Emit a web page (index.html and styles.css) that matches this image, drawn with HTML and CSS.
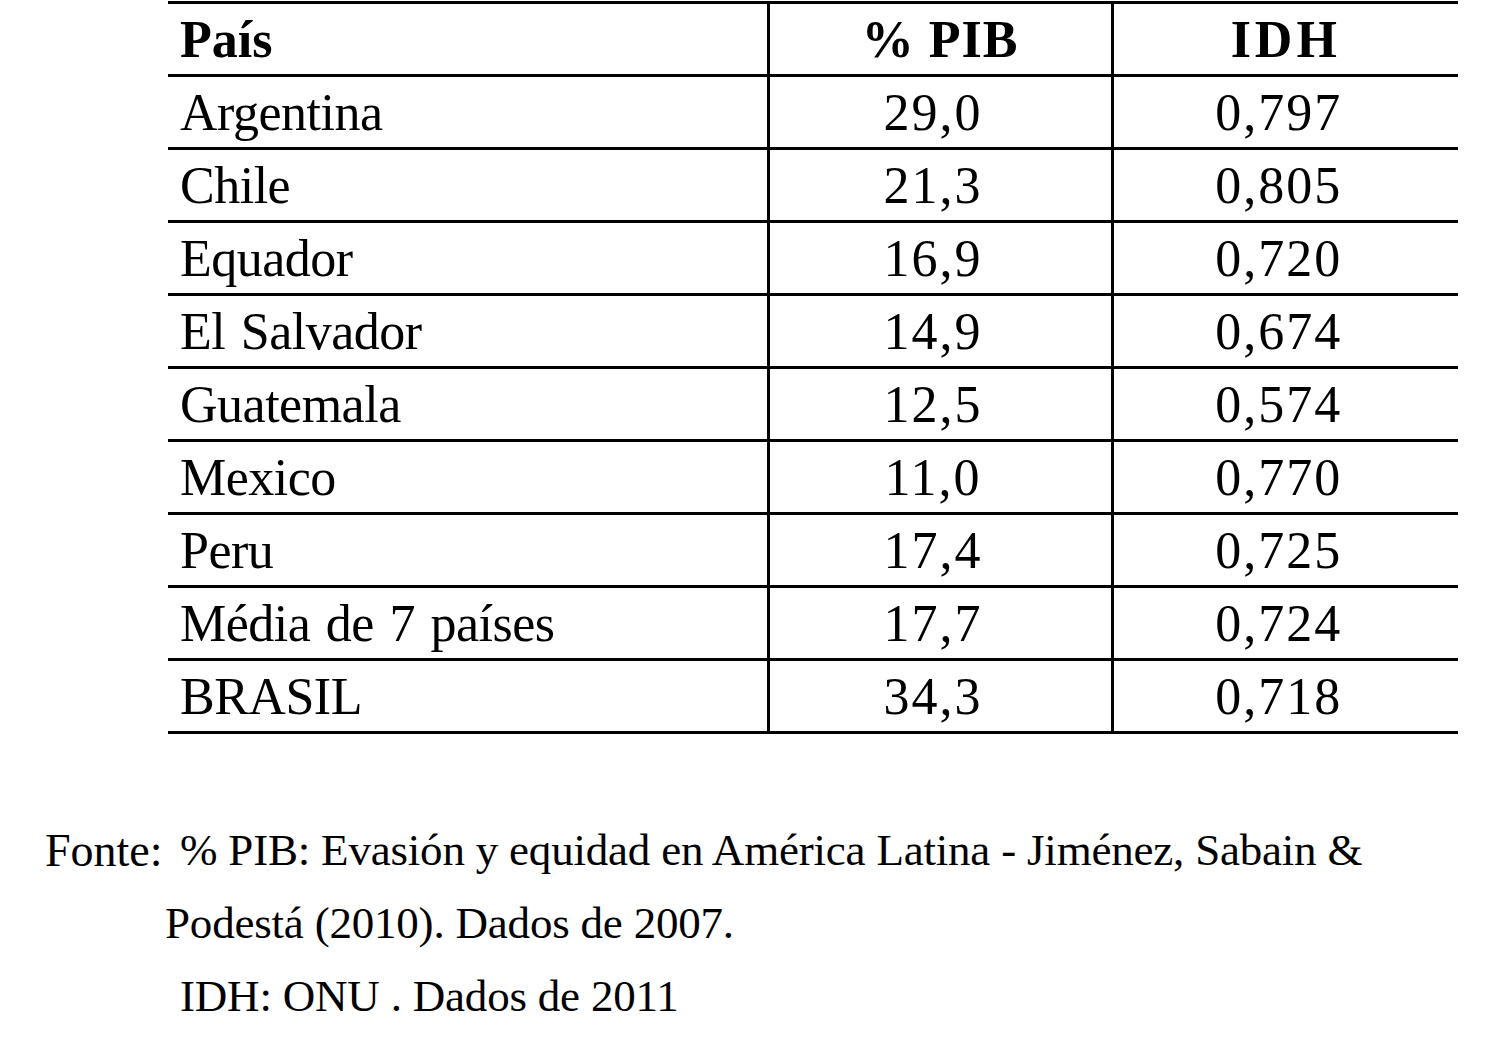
FILE: index.html
```html
<!DOCTYPE html>
<html lang="pt">
<head>
  <meta charset="UTF-8" />
  <meta name="viewport" content="width=device-width, initial-scale=1" />
  <title>% PIB e IDH</title>
  <link rel="stylesheet" href="styles.css">
</head>
<body>

  <table class="data-table">
    <colgroup>
      <col class="col-country">
      <col class="col-pib">
      <col class="col-idh">
    </colgroup>
    <thead>
      <tr>
        <th class="country">País</th>
        <th>% PIB</th>
        <th>IDH</th>
      </tr>
    </thead>
    <tbody>
      <tr><td class="country">Argentina</td><td>29,0</td><td>0,797</td></tr>
      <tr><td class="country">Chile</td><td>21,3</td><td>0,805</td></tr>
      <tr><td class="country">Equador</td><td>16,9</td><td>0,720</td></tr>
      <tr><td class="country">El Salvador</td><td>14,9</td><td>0,674</td></tr>
      <tr><td class="country">Guatemala</td><td>12,5</td><td>0,574</td></tr>
      <tr><td class="country">Mexico</td><td>11,0</td><td>0,770</td></tr>
      <tr><td class="country">Peru</td><td>17,4</td><td>0,725</td></tr>
      <tr><td class="country">Média de 7 países</td><td>17,7</td><td>0,724</td></tr>
      <tr><td class="country">BRASIL</td><td>34,3</td><td>0,718</td></tr>
    </tbody>
  </table>

  <div class="source">
    <div class="source-label">Fonte:</div>
    <div class="source-text">
      <div class="indent">% PIB: Evasión y equidad en América Latina - Jiménez, Sabain &amp;</div>
      <div>Podestá (2010). Dados de 2007.</div>
      <div class="indent">IDH: ONU . Dados de 2011</div>
    </div>
  </div>

</body>
</html>
```

FILE: styles.css
```css
body {
  margin: 0;
  background: #fff;
  color: #000;
  font-family: "Liberation Serif", "Times New Roman", serif;
}
.data-table {
  margin: 1px 0 0 168px;
  width: 1290px;
  border-collapse: collapse;
  table-layout: fixed;
  font-size: 52px;
}
.col-country { width: 600px; }
.col-pib { width: 344px; }
.col-idh { width: 346px; }
.data-table th,
.data-table td {
  padding: 2px 14px 0 0;
  line-height: 68px;
  text-align: center;
  white-space: nowrap;
  letter-spacing: 2px;
  border-top: 3px solid #000;
  border-bottom: 3px solid #000;
  border-left: 3px solid #000;
}
.data-table th:first-child,
.data-table td:first-child {
  border-left: none;
}
.data-table th {
  font-weight: bold;
  letter-spacing: 1px;
  padding-right: 0;
}
.data-table th:last-child {
  letter-spacing: 4px;
}
.data-table .country {
  text-align: left;
  padding: 2px 0 0 12px;
  letter-spacing: -0.5px;
  word-spacing: 3px;
}
.data-table th.country {
  letter-spacing: 0;
  word-spacing: 0;
}
/* Source note */
.source {
  display: flex;
  margin: 80px 0 0 45px;
  font-size: 46px;
  line-height: 73px;
}
.source-label {
  width: 120px;
}
.source-text {
  font-size: 45px;
  letter-spacing: -0.2px;
}
.source-text .indent {
  padding-left: 15px;
}
```
